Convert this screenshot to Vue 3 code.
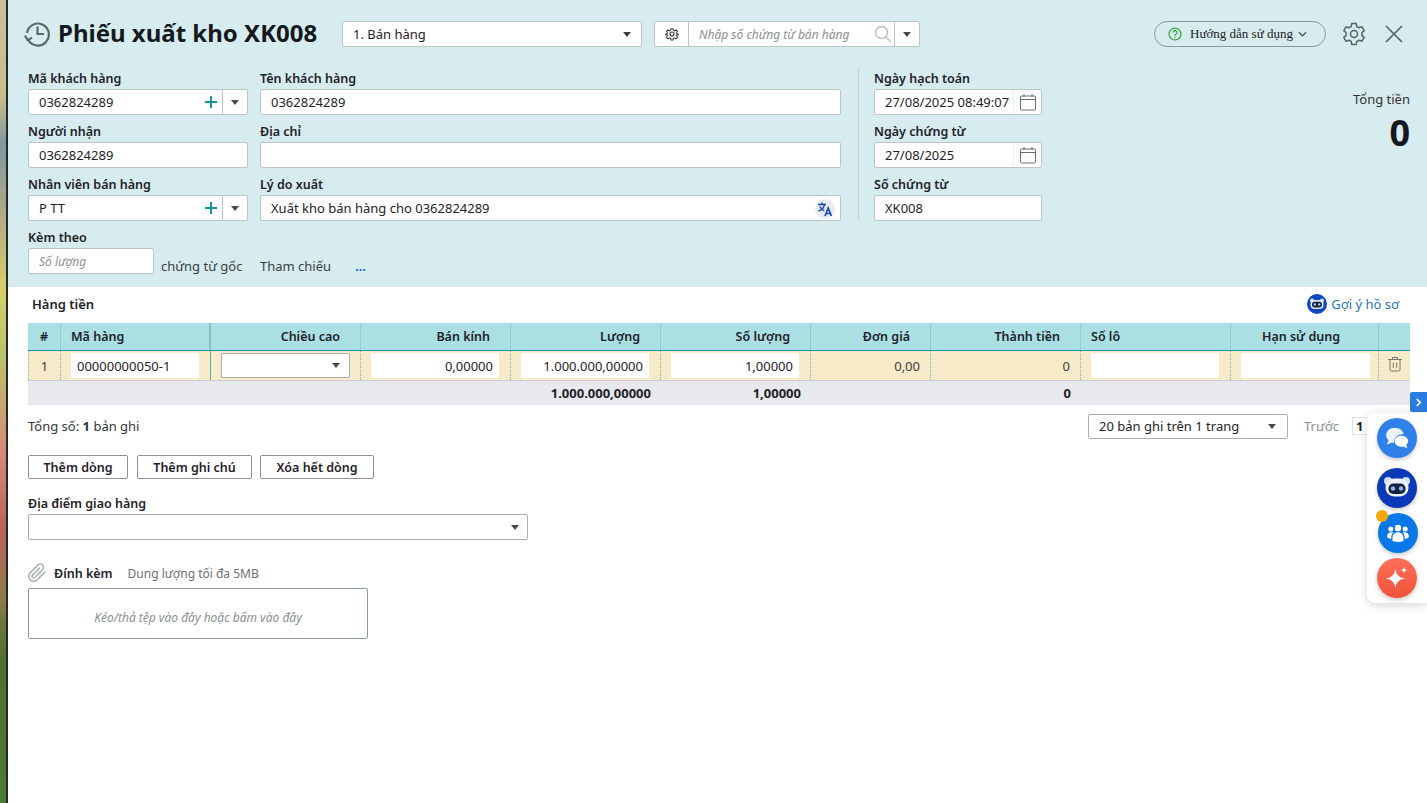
<script setup>
const headers = [
  { t: '#', c: 'center' }, { t: 'Mã hàng', c: 'left' }, { t: 'Chiều cao', c: 'right' }, { t: 'Bán kính', c: 'right' },
  { t: 'Lượng', c: 'right' }, { t: 'Số lượng', c: 'right' }, { t: 'Đơn giá', c: 'right' }, { t: 'Thành tiền', c: 'right' },
  { t: 'Số lô', c: 'left' }, { t: 'Hạn sử dụng', c: 'center' }, { t: '', c: 'center' }
]
const totals = ['', '', '', '', '1.000.000,00000', '1,00000', '', '0', '', '', '']
</script>

<template>
  <div class="app">
    <div class="strip"></div>
    <div class="main">
      <header class="head">
        <div class="top">
          <svg class="hist" viewBox="0 0 26 26" width="26" height="26" fill="none" stroke="#5c676b" stroke-width="2.200">
            <path d="M4.200 18.800A11 11 0 1 0 3 12" />
            <path d="M1 14.600l2.600 4.600 4.400-2.600" stroke-linejoin="round" />
            <path d="M13.500 5.500v7.500h6.500" />
          </svg>
          <h1 class="title">Phiếu xuất kho XK008</h1>
          <div class="box typesel"><span>1. Bán hàng</span><i class="tri"></i></div>
          <div class="box search">
            <div class="s-gear">
              <svg viewBox="0 0 24 24" width="14" height="14" fill="none" stroke="#333" stroke-width="2">
                <circle cx="12" cy="12" r="3.400" />
                <path d="M10 2h4l.6 3 2.400 1 2.600-1.700 2.800 2.800-1.700 2.600 1 2.400 3 .6v0l-3 .6-1 2.400 1.700 2.600-2.800 2.800-2.600-1.700-2.400 1-.6 3h-4l-.6-3-2.400-1-2.600 1.700-2.800-2.800 1.700-2.600-1-2.400-3-.6v-0l3-.6 1-2.400-1.700-2.600 2.800-2.800 2.600 1.700 2.400-1z" transform="translate(1.200 1.200) scale(.9)" stroke-linejoin="round" />
              </svg>
            </div>
            <span class="s-text">Nhập số chứng từ bán hàng</span>
            <svg class="s-mag" viewBox="0 0 18 18" width="18" height="18" fill="none" stroke="#b9c0c2" stroke-width="1.500">
              <circle cx="7.500" cy="7.500" r="6" /><path d="M12 12l5 5" />
            </svg>
            <div class="s-drop"><i class="tri dark"></i></div>
          </div>
          <div class="top-right">
            <div class="guide">
              <svg viewBox="0 0 16 16" width="14" height="14" fill="none" stroke="#2aa12a" stroke-width="1.300">
                <circle cx="8" cy="8" r="6.800" />
                <path d="M5.800 6.300a2.200 2.200 0 1 1 3.300 1.900c-.7.400-1.100.9-1.100 1.700" />
                <path d="M8 11v1.300" />
              </svg>
              <span>Hướng dẫn sử dụng</span>
              <svg viewBox="0 0 10 6" width="9" height="6" fill="none" stroke="#555" stroke-width="1.400"><path d="M1 1l4 4 4-4" /></svg>
            </div>
            <svg class="gear" viewBox="0 0 24 24" width="24" height="24" fill="none" stroke="#5a6468" stroke-width="1.500" stroke-linejoin="round">
              <circle cx="12" cy="12" r="3.500" />
              <path d="M9.800 1.500h4.400l.6 3 2.300 1.300 2.900-1 2.200 3.800-2.300 2v2.800l2.300 2-2.200 3.800-2.900-1-2.300 1.300-.6 3H9.800l-.6-3-2.300-1.300-2.900 1-2.200-3.800 2.300-2v-2.800l-2.300-2 2.200-3.800 2.900 1 2.300-1.300z" />
            </svg>
            <svg class="close" viewBox="0 0 18 18" width="18" height="18" fill="none" stroke="#5a6468" stroke-width="1.700"><path d="M1 1l16 16M17 1L1 17" /></svg>
          </div>
        </div>

        <div class="formwrap">
          <div class="form">
            <div class="f">
              <label>Mã khách hàng</label>
              <div class="box ctl"><span class="val">0362824289</span><span class="plus"></span><div class="drop"><i class="tri dark"></i></div></div>
            </div>
            <div class="f">
              <label>Tên khách hàng</label>
              <div class="box ctl"><span class="val">0362824289</span></div>
            </div>
            <div class="f">
              <label>Người nhận</label>
              <div class="box ctl"><span class="val">0362824289</span></div>
            </div>
            <div class="f">
              <label>Địa chỉ</label>
              <div class="box ctl"></div>
            </div>
            <div class="f">
              <label>Nhân viên bán hàng</label>
              <div class="box ctl"><span class="val">P TT</span><span class="plus"></span><div class="drop"><i class="tri dark"></i></div></div>
            </div>
            <div class="f">
              <label>Lý do xuất</label>
              <div class="box ctl">
                <span class="val">Xuất kho bán hàng cho 0362824289</span>
                <span class="trans">
                  <svg viewBox="0 0 16 16" width="16" height="16" fill="none" stroke="#1646b8" stroke-width="1.500">
                    <path d="M1 3.500h8M5 1.500v2M7.500 3.500C7 6.500 4.500 9 1.500 10M2.800 5.500c.9 2 2.600 3.400 4.400 4.200" />
                    <path d="M8 15l3.200-8 3.200 8M9.200 12.500h4" stroke-width="1.700" />
                  </svg>
                </span>
              </div>
            </div>
            <div class="f attach">
              <label>Kèm theo</label>
              <div class="attach-row">
                <div class="box ctl qty"><span class="val ph">Số lượng</span></div>
                <span class="doc">chứng từ gốc</span>
                <span class="ref">Tham chiếu</span>
                <span class="dots">...</span>
              </div>
            </div>
          </div>
          <div class="dates">
            <div class="f">
              <label>Ngày hạch toán</label>
              <div class="box ctl"><span class="val">27/08/2025 08:49:07</span><div class="cal"><svg viewBox="0 0 16 18" width="16" height="18" fill="none" stroke="#666d70" stroke-width="1"><rect x=".5" y="3" width="15" height="14" rx="1" /><path d="M.5 6.500h15M4 1v3M12 1v3" /></svg></div></div>
            </div>
            <div class="f">
              <label>Ngày chứng từ</label>
              <div class="box ctl"><span class="val">27/08/2025</span><div class="cal"><svg viewBox="0 0 16 18" width="16" height="18" fill="none" stroke="#666d70" stroke-width="1"><rect x=".5" y="3" width="15" height="14" rx="1" /><path d="M.5 6.500h15M4 1v3M12 1v3" /></svg></div></div>
            </div>
            <div class="f">
              <label>Số chứng từ</label>
              <div class="box ctl"><span class="val">XK008</span></div>
            </div>
          </div>
          <div class="total">
            <div class="t-label">Tổng tiền</div>
            <div class="t-val">0</div>
          </div>
        </div>
      </header>

      <section class="body">
        <div class="sec-head">
          <strong>Hàng tiền</strong>
          <a class="suggest">
            <svg viewBox="0 0 20 20" width="20" height="20">
              <circle cx="10" cy="10" r="10" fill="#0d47c4" />
              <circle cx="5" cy="6.500" r="2" fill="#dfe9f7" /><circle cx="15" cy="6.500" r="2" fill="#dfe9f7" />
              <rect x="3.500" y="6" width="13" height="9" rx="4" fill="#dfe9f7" />
              <rect x="5" y="7.800" width="10" height="5.600" rx="2.600" fill="#14233f" />
              <circle cx="7.800" cy="10.500" r="1.300" fill="#9ec0e8" /><circle cx="12.200" cy="10.500" r="1.300" fill="#9ec0e8" />
            </svg>
            Gợi ý hồ sơ
          </a>
        </div>

        <div class="grid">
          <div class="g-row g-head">
            <div v-for="(h, i) in headers" :key="i" :class="['hc', h.c, { thick: i === 1 }]">{{ h.t }}</div>
          </div>
          <div class="g-row g-data">
            <div class="dc center plain">1</div>
            <div class="dc thick"><div class="cell-in">00000000050-1</div></div>
            <div class="dc wide"><div class="cell-in sel"><i class="tri dark"></i></div></div>
            <div class="dc"><div class="cell-in right">0,00000</div></div>
            <div class="dc"><div class="cell-in right">1.000.000,00000</div></div>
            <div class="dc"><div class="cell-in right">1,00000</div></div>
            <div class="dc plain right">0,00</div>
            <div class="dc plain right">0</div>
            <div class="dc"><div class="cell-in"></div></div>
            <div class="dc narrow"><div class="cell-in"></div></div>
            <div class="dc center plain last">
              <svg viewBox="0 0 16 16" width="16" height="16" fill="none" stroke="#757575" stroke-width="1"><path d="M1 3.500h14M5.500 3.500V1.500h5v2M3 3.500v10a1.500 1.500 0 0 0 1.500 1.500h7a1.500 1.500 0 0 0 1.500-1.500v-10M6.300 6.500v5.500M9.700 6.500v5.500" /></svg>
            </div>
          </div>
          <div class="g-row g-foot">
            <div v-for="(t, i) in totals" :key="i" class="fc">{{ t }}</div>
          </div>
        </div>

        <div class="pager">
          <div class="count">Tổng số: <b>1</b> bản ghi</div>
          <div class="box2 per"><span>20 bản ghi trên 1 trang</span><i class="tri dark"></i></div>
          <span class="prev">Trước</span>
          <span class="page">1</span>
        </div>

        <div class="btns">
          <button class="btn b1">Thêm dòng</button>
          <button class="btn b2">Thêm ghi chú</button>
          <button class="btn b3">Xóa hết dòng</button>
        </div>

        <div class="place">
          <label>Địa điểm giao hàng</label>
          <div class="box2 placesel"><i class="tri dark"></i></div>
        </div>

        <div class="att-head">
          <svg viewBox="0 0 24 24" width="20" height="20" fill="none" stroke="#aeb3b5" stroke-width="2" stroke-linecap="round" stroke-linejoin="round">
            <path d="M21.440 11.050l-9.190 9.190a6 6 0 0 1-8.490-8.490l9.190-9.190a4 4 0 0 1 5.660 5.660l-9.200 9.190a2 2 0 0 1-2.830-2.830l8.490-8.480" />
          </svg>
          <strong>Đính kèm</strong>
          <span>Dung lượng tối đa 5MB</span>
        </div>
        <div class="dropzone">Kéo/thả tệp vào đây hoặc bấm vào đây</div>
      </section>
    </div>

    <div class="tab">
      <svg viewBox="0 0 8 10" width="7" height="9" fill="none" stroke="#fff" stroke-width="2"><path d="M2 1l4 4-4 4" /></svg>
    </div>
    <aside class="dock">
      <div class="fab f-chat">
        <svg viewBox="0 0 24 24" width="26" height="26">
          <path d="M10 2.500c-4.500 0-8 2.900-8 6.800 0 1.900.8 3.600 2.200 4.900L2.500 18l5-1.900c.6.100 1.100.2 1.700.2-.2-4.400 3.200-7.800 9-7.900C17.500 5.100 14.100 2.500 10 2.500z" fill="#e9f2fd" />
          <path d="M16 10c-3.700 0-6.200 2.300-6.200 5s2.500 5 6.200 5c.7 0 1.300-.1 1.900-.2l3.600 1.600-1-3.200c1.100-.9 1.700-2 1.700-3.200 0-2.700-2.500-5-6.200-5z" fill="#fff" />
        </svg>
      </div>
      <div class="fab f-bot">
        <svg viewBox="0 0 30 30" width="30" height="30">
          <circle cx="6" cy="8" r="4" fill="#cfe0f5" /><circle cx="24" cy="8" r="4" fill="#cfe0f5" />
          <rect x="3.500" y="5.500" width="23" height="18" rx="8.500" fill="#eaf1fb" />
          <rect x="6.500" y="10.500" width="17" height="10.500" rx="5" fill="#14213d" />
          <circle cx="11" cy="15.500" r="2.200" fill="#8fb4e3" /><circle cx="19" cy="15.500" r="2.200" fill="#8fb4e3" />
        </svg>
      </div>
      <div class="fab f-team">
        <span class="dot"></span>
        <svg viewBox="0 0 24 24" width="24" height="24" fill="#fff">
          <circle cx="12" cy="7" r="3.200" /><circle cx="4.800" cy="8" r="2.500" /><circle cx="19.200" cy="8" r="2.500" />
          <path d="M6.500 20v-3.500c0-3 2.400-5.300 5.500-5.300s5.500 2.300 5.500 5.300V20c-3.500 1.300-7.500 1.300-11 0z" />
          <path d="M1 16c0-2.800 1.500-4.800 4.800-4.800.6 0 1.100.1 1.500.2-1.300 1.200-2 3-2 5v1.600C3.500 17.800 2 17.200 1 16zM23 16c0-2.800-1.500-4.800-4.800-4.800-.6 0-1.100.1-1.500.2 1.300 1.200 2 3 2 5v1.600c1.800-.2 3.300-.8 4.300-2z" />
        </svg>
      </div>
      <div class="fab f-spark">
        <svg viewBox="0 0 24 24" width="26" height="26" fill="#fff">
          <path d="M10.500 3.500c.9 5.800 3 8 9 9-6 1-8.100 3.200-9 9-.9-5.800-3-8-9-9 6-1 8.100-3.200 9-9z" />
          <path d="M18.500 1.500c.4 2 1.100 2.800 3 3.200-1.900.4-2.600 1.100-3 3.200-.4-2.100-1.100-2.800-3-3.200 1.900-.4 2.600-1.200 3-3.200z" />
        </svg>
      </div>
    </aside>
  </div>
</template>

<style>
html, body { margin: 0; background: #fff; overflow: hidden; }
</style>

<style scoped>
* { box-sizing: border-box; }
.app {
  display: flex; width: 1427px; height: 803px; overflow: hidden; position: relative;
  font-family: "Noto Sans", "Open Sans", sans-serif; font-size: 13px; color: #1f2229;
}
.strip {
  width: 8px; flex: none; border-right: 2px solid #23282b;
  background: linear-gradient(180deg, #c9c09a 0, #c8bd8e 12%, #7f98a0 18%, #b8ac84 28%, #d6cf6a 36%, #b9c36a 44%, #d58c7a 56%, #b9635a 66%, #8f7a4c 74%, #4f7034 82%, #4c7a30 100%);
}
.main { flex: 1; min-width: 0; display: flex; flex-direction: column; }
.head { height: 287px; background: #d6ecef; padding: 21px 17px 0 20px; flex: none; }
.top { display: flex; align-items: center; height: 26px; }
.hist { margin: 0 8px 0 -4px; flex: none; }
.title { margin: 0 0 2px; font-size: 24px; font-weight: 700; line-height: 26px; color: #15181c; width: 284px; white-space: nowrap; }
.box { background: #fff; border: 1px solid #bcc6c9; border-radius: 2px; display: flex; align-items: center; height: 26px; }
.typesel { width: 300px; padding: 0 10px; justify-content: space-between; flex: none; }
.tri { width: 0; height: 0; border-left: 4px solid transparent; border-right: 4px solid transparent; border-top: 5px solid #3b4043; display: block; }
.tri.dark { border-top-color: #444a4d; }
.search { width: 266px; margin-left: 12px; flex: none; }
.s-gear { width: 34px; height: 24px; display: flex; align-items: center; justify-content: center; border-right: 1px solid #bcc6c9; flex: none; }
.s-text { font-style: italic; color: #8a9094; font-size: 12px; padding-left: 10px; flex: 1; white-space: nowrap; }
.s-mag { margin-right: 2px; }
.s-drop { width: 25px; height: 24px; display: flex; align-items: center; justify-content: center; border-left: 1px solid #bcc6c9; flex: none; }
.top-right { margin-left: auto; display: flex; align-items: center; }
.guide {
  width: 172px; height: 26px; border: 1px solid #8a9a9e; border-radius: 13px; display: flex; align-items: center; padding-left: 13px; gap: 8px;
  font-family: "Liberation Serif", serif; font-size: 13px; color: #222; margin-right: 16px; white-space: nowrap;
}
.guide span { margin-right: -3px; }
.gear { margin-right: 19px; flex: none; }
.close { margin-right: 7px; flex: none; }

.formwrap { display: flex; margin-top: 21px; position: relative; }
.form { display: grid; grid-template-columns: 220px 581px; column-gap: 12px; row-gap: 0; flex: none; width: 813px; grid-auto-rows: 53px; height: 212px; }
.f label, .place label { display: block; font-weight: 600; font-size: 12.500px; line-height: 21px; height: 21px; color: #1f2229; white-space: nowrap; }
.ctl { padding-left: 10px; position: relative; }
.val { flex: 1; white-space: nowrap; }
.plus {
  width: 12px; height: 12px; margin-right: 5px; flex: none;
  background: linear-gradient(#16929f, #16929f) center / 12px 2px no-repeat, linear-gradient(#16929f, #16929f) center / 2px 12px no-repeat;
}
.drop { width: 25px; height: 24px; display: flex; align-items: center; justify-content: center; border-left: 1px solid #bcc6c9; flex: none; }
.trans { width: 20px; height: 20px; border-radius: 50%; background: #e8edf4; display: flex; align-items: center; justify-content: center; margin: 2px 5px 0 0; flex: none; }
.attach { grid-column: 1 / span 2; }
.attach-row { display: flex; align-items: flex-end; height: 26px; }
.qty { width: 126px; flex: none; }
.ph { font-style: italic; color: #8a9094; font-size: 12px; }
.doc { margin-left: 7px; width: 99px; line-height: 20px; color: #3b4043; white-space: nowrap; margin-bottom: -2px; }
.ref { width: 95px; line-height: 20px; color: #3b4043; white-space: nowrap; margin-bottom: -2px; }
.dots { color: #1d6fc4; font-weight: 700; line-height: 20px; margin-bottom: -2px; }
.dates { margin-left: 17px; padding-left: 15px; border-left: 1px solid #bfd4d8; width: 184px; flex: none; height: 152px; display: grid; grid-auto-rows: 53px; }
.cal { width: 28px; height: 24px; display: flex; align-items: center; justify-content: center; border-left: 1px solid #eef1f2; flex: none; margin-left: auto; }
.total { margin-left: auto; text-align: right; padding-top: 22px; }
.t-label { font-size: 13px; color: #333; line-height: 18px; }
.t-val { font-size: 36px; font-weight: 700; line-height: 50px; color: #15181c; }

.body { padding: 0 17px 0 20px; flex: 1; }
.sec-head { display: flex; justify-content: space-between; align-items: center; height: 36px; padding-bottom: 2px; }
.sec-head strong { font-weight: 600; font-size: 13px; padding-left: 4px; }
.suggest { display: flex; align-items: center; gap: 4px; color: #2b76b9; font-size: 13px; padding-right: 11px; }
.grid { width: 1382px; }
.g-row { display: grid; grid-template-columns: 33px 150px 150px 150px 150px 150px 120px 150px 150px 148px 31px; }
.g-head { height: 28px; background: #aae0e4; border-bottom: 1px solid #1d8f96; }
.hc { font-weight: 600; font-size: 12.500px; line-height: 27px; padding: 0 20px 0 10px; border-right: 1px solid #8fcdd2; white-space: nowrap; }
.hc.center { text-align: center; padding: 0 7px 0 0; }
.hc:first-child { padding: 0; }
.hc.left { padding-left: 10px; }
.hc.right { text-align: right; }
.hc.thick { border-right: 2px solid #83c3c8; }
.hc:last-child { border-right: 0; }
.g-data { height: 30px; background: #f8ebc9; border-bottom: 1px solid #c9ccd0; }
.dc { padding: 2px 11px 0 10px; border-right: 1px dotted #7fb0a8; line-height: 26px; white-space: nowrap; }
.dc.wide { padding-right: 10px; }
.dc.narrow { padding-right: 8px; }
.dc:first-child { border-left: 1px dotted #7fb0a8; }
.dc.thick { border-right: 1px solid #58a9ae; }
.dc.center { text-align: center; padding: 2px 0 0; }
.dc.plain { color: #3b4043; }
.dc.right { text-align: right; padding-right: 10px; }
.dc.last { border-right: 0; padding: 5px 0 0; line-height: 0; }
.cell-in { background: #fff; height: 25px; line-height: 27px; padding: 0 6px; border-radius: 1px; }
.cell-in.right { text-align: right; }
.cell-in.sel { border: 1px solid #a9aeb0; display: flex; align-items: center; justify-content: flex-end; padding-right: 9px; }
.g-foot { height: 24px; background: #e8e9ed; font-weight: 700; }
.fc { text-align: right; line-height: 24px; padding-right: 10px; font-size: 13px; white-space: nowrap; overflow: visible; }

.pager { display: flex; align-items: center; margin-top: 8px; height: 26px; width: 1400px; }
.count { width: 1060px; color: #33373a; flex: none; }
.count b { font-weight: 700; }
.box2 { border: 1px solid #a9aeb0; border-radius: 2px; background: #fff; display: flex; align-items: center; }
.per { width: 200px; height: 25px; padding: 0 11px 0 10px; justify-content: space-between; flex: none; }
.prev { margin-left: 16px; color: #8a9094; width: 48px; flex: none; }
.page { width: 20px; height: 18px; border: 1px solid #dfe1e2; font-weight: 700; line-height: 16px; padding-left: 3px; flex: none; }
.btns { display: flex; margin-top: 16px; height: 24px; }
.btn {
  font: 600 12.500px "Noto Sans", sans-serif; color: #1f2229; background: #fff; border: 1px solid #8a9094; border-radius: 2px; height: 24px; padding: 0; flex: none;
}
.b1 { width: 100px; margin-right: 9px; }
.b2 { width: 115px; margin-right: 8px; }
.b3 { width: 114px; }
.place { margin-top: 14px; }
.placesel { width: 500px; height: 26px; justify-content: flex-end; padding-right: 8px; margin-top: 0; }
.att-head { display: flex; align-items: center; height: 20px; margin-top: 23px; }
.att-head svg { margin-left: -1px; flex: none; }
.att-head strong { font-weight: 600; font-size: 12.500px; margin-left: 7px; color: #1f2229; }
.att-head span { font-size: 12px; color: #6b7073; margin-left: 15px; }
.dropzone {
  width: 340px; height: 51px; margin-top: 5px; padding-top: 8px; border: 1px solid #8a9a9e; border-radius: 2px; display: flex; align-items: center; justify-content: center;
  font-style: italic; color: #8a9094; font-size: 12px;
}

.tab { position: absolute; left: 1410px; top: 392px; width: 17px; height: 20px; background: #2a7de1; border-radius: 2px 0 0 2px; display: flex; align-items: center; justify-content: center; }
.dock {
  position: absolute; left: 1367px; top: 413px; width: 60px; height: 190px; background: #fff; border-radius: 8px 0 0 8px;
  box-shadow: 0 2px 10px rgba(0, 0, 0, .18); padding: 5px 0 0 10px;
}
.fab { width: 40px; height: 40px; border-radius: 50%; display: flex; align-items: center; justify-content: center; position: relative; box-shadow: 0 2px 4px rgba(0, 0, 0, .22); }
.f-chat { background: #2f80e8; margin-bottom: 10px; }
.f-bot { background: #0a39b8; margin-bottom: 5px; }
.f-team { background: #0a78e6; margin-bottom: 5px; margin-left: 1px; }
.f-spark { background: linear-gradient(180deg, #fb7058, #f1533b); }
.dot { position: absolute; left: -2px; top: -3px; width: 12px; height: 12px; border-radius: 50%; background: #f6a609; }
</style>
